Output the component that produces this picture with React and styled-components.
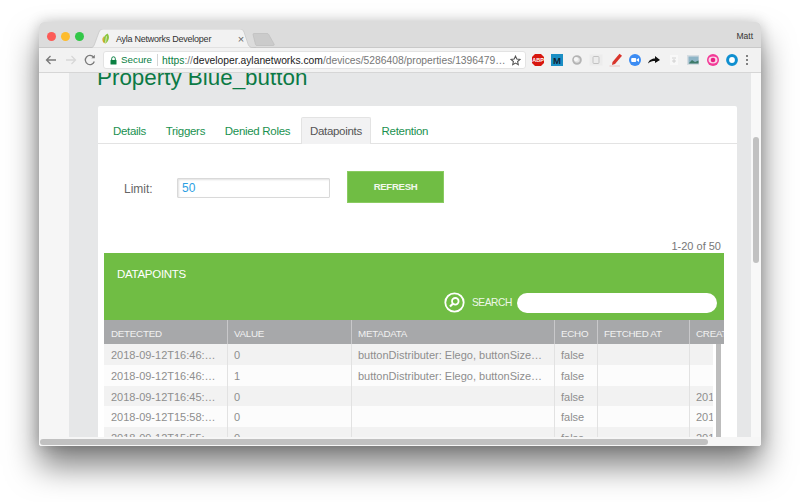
import React from "react";
import styled, { createGlobalStyle } from "styled-components";

const Global = createGlobalStyle`
  html, body {
    margin: 0;
    padding: 0;
    background: #fff;
    font-family: "Liberation Sans", Arial, sans-serif;
  }
`;

const Stage = styled.div`
  width: 800px;
  height: 502px;
  padding: 22px 39px 0;
  box-sizing: border-box;
  overflow: hidden;
`;

const Win = styled.div`
  width: 722px;
  height: 424px;
  border-radius: 5px 5px 3px 3px;
  overflow: hidden;
  display: flex;
  flex-direction: column;
  box-shadow: 0 20px 32px rgba(0, 0, 0, 0.5), 0 0 14px rgba(0, 0, 0, 0.2);
`;

const TitleBar = styled.div`
  height: 26px;
  flex: none;
  background: #dcdcdc;
  display: flex;
  align-items: flex-end;
  padding-left: 8px;
  position: relative;
  box-sizing: border-box;
  border-bottom: 1px solid #c9c9c9;
`;

const Lights = styled.div`
  display: flex;
  gap: 5px;
  align-self: flex-start;
  margin-top: 10px;
`;

const Light = styled.span`
  width: 9px;
  height: 9px;
  border-radius: 50%;
  background: ${p => p.$c};
`;

const Tab = styled.div`
  width: 166px;
  height: 19px;
  margin-left: 6px;
  margin-bottom: -1px;
  position: relative;
  display: flex;
  align-items: center;
  padding-left: 11px;
  box-sizing: border-box;
  font-size: 9px;
  letter-spacing: -0.25px;
  color: #333;
`;

const TabShape = styled.svg`
  position: absolute;
  left: 0;
  top: 0;
`;

const TabLabel = styled.span`
  position: relative;
  margin-left: 5px;
  flex: 1;
  white-space: nowrap;
`;

const TabClose = styled.span`
  position: relative;
  font-size: 11px;
  color: #666;
  margin-right: 12px;
`;

const Favicon = styled.svg`
  position: relative;
  flex: none;
`;

const NewTab = styled.svg`
  margin-left: -4px;
  margin-bottom: 1px;
`;

const UserName = styled.span`
  margin-left: auto;
  align-self: flex-start;
  margin-top: 9px;
  margin-right: 8px;
  font-size: 8.5px;
  color: #333;
`;

const Toolbar = styled.div`
  height: 25px;
  flex: none;
  background: #f2f2f2;
  display: flex;
  align-items: center;
  box-sizing: border-box;
  padding-left: 6px;
  border-bottom: 1px solid #d6d6d6;
`;

const NavButtons = styled.div`
  display: flex;
  align-items: center;
  gap: 7.5px;
  width: 58px;
  flex: none;
`;

const Omnibox = styled.div`
  width: 423px;
  height: 18px;
  flex: none;
  box-sizing: border-box;
  background: #fff;
  border: 1px solid #e3e3e3;
  border-radius: 3px;
  display: flex;
  align-items: center;
  padding-left: 6px;
  font-size: 10.3px;
  white-space: nowrap;
`;

const SecureText = styled.span`
  color: #0b8043;
  font-size: 9.8px;
  margin-left: 4px;
  padding-right: 5px;
  border-right: 1px solid #d5d5d5;
  margin-right: 4px;
  line-height: 12px;
`;

const UrlPart = styled.span`
  color: ${p => p.$c};
`;

const Url = styled.span`
  flex: 1;
`;

const Star = styled.svg`
  margin-right: 4px;
  flex: none;
`;

const Extensions = styled.div`
  display: flex;
  align-items: center;
  margin-left: 2.3px;
`;

const ExtSlot = styled.div`
  width: ${p => p.$w || 19.4}px;
  height: 14px;
  display: flex;
  justify-content: center;
  align-items: center;
`;

const Viewport = styled.div`
  height: 373px;
  flex: none;
  display: flex;
  flex-direction: column;
  background: #fafafa;
`;

const ViewportRow = styled.div`
  height: 364px;
  flex: none;
  display: flex;
  overflow: hidden;
`;

const Gutter = styled.div`
  width: 30px;
  flex: none;
  background: #f6f6f6;
`;

const Main = styled.div`
  width: 682px;
  flex: none;
  background: #e6e7e8;
  padding-left: 28px;
  padding-right: 14px;
  box-sizing: border-box;
`;

const Heading = styled.h1`
  margin: -9px 0 0;
  height: 42px;
  font-size: 22.4px;
  line-height: 28px;
  font-weight: 400;
  color: #0b7a45;
  white-space: nowrap;
`;

const Card = styled.div`
  background: #fff;
  height: 331px;
  margin-left: 1px;
  overflow: hidden;
  border-radius: 2px 2px 0 0;
`;

const Tabs = styled.div`
  display: flex;
  height: 38px;
  box-sizing: border-box;
  padding: 11px 0 0 6px;
  border-bottom: 1px solid #e3e3e3;
`;

const PageTab = styled.div`
  height: 27px;
  box-sizing: border-box;
  padding: 0 8px;
  margin-right: 1.7px;
  font-size: 11.5px;
  letter-spacing: -0.3px;
  line-height: 26px;
  white-space: nowrap;
  color: ${p => (p.$active ? "#555" : "#1a9150")};
  background: ${p => (p.$active ? "#f2f2f3" : "transparent")};
  border: 1px solid ${p => (p.$active ? "#e3e3e3" : "transparent")};
  border-bottom: 0;
  border-radius: 2px 2px 0 0;
`;

const LimitRow = styled.div`
  display: flex;
  align-items: flex-start;
  padding: 27px 0 0 26px;
  height: 60px;
`;

const LimitLabel = styled.label`
  width: 53px;
  font-size: 12px;
  color: #666;
  padding-top: 11px;
`;

const LimitInput = styled.div`
  width: 153px;
  height: 20px;
  margin-top: 7px;
  box-sizing: border-box;
  border: 1px solid #d9d9d9;
  box-shadow: inset 1px 1px 2px rgba(0, 0, 0, 0.12);
  padding-left: 4px;
  font-size: 12px;
  line-height: 19px;
  color: #2d9fe3;
  border-radius: 1px;
`;

const Refresh = styled.button`
  width: 97px;
  height: 32px;
  margin-left: 17px;
  border: 1px solid #8acb61;
  background: #70bd44;
  color: #f2f8ec;
  font-family: inherit;
  font-size: 9.6px;
  letter-spacing: -0.3px;
  font-weight: 700;
  padding: 0 0 1px;
`;

const Count = styled.div`
  text-align: right;
  font-size: 11px;
  color: #777;
  padding: 8px 16px 0 0;
  height: 14px;
  line-height: 14px;
`;

const TablePanel = styled.div`
  margin: 0 13px 0 6px;
`;

const PanelHead = styled.div`
  height: 67px;
  background: #70bd44;
  box-sizing: border-box;
  padding: 14px 7px 0 13px;
  display: flex;
  flex-direction: column;
`;

const PanelTitle = styled.div`
  color: #fff;
  font-size: 11.5px;
  letter-spacing: -0.28px;
  line-height: 14px;
`;

const SearchRow = styled.div`
  display: flex;
  align-items: center;
  justify-content: flex-end;
  margin-top: 11px;
`;

const SearchLabel = styled.span`
  color: #eef7e8;
  font-size: 10.2px;
  letter-spacing: -0.4px;
  margin: 0 5px 0 7px;
`;

const SearchBox = styled.div`
  width: 200px;
  height: 20px;
  background: #fff;
  border-radius: 10px;
`;

const TableWrap = styled.div`
  position: relative;
`;

const Grid = styled.div`
  display: grid;
  grid-template-columns: 123px 124px 203px 43px 92px 35px;
  overflow: hidden;
`;

const HeadCell = styled.div`
  height: 24px;
  background: #a7a8aa;
  color: #f1f1f1;
  font-size: 9.8px;
  letter-spacing: -0.26px;
  line-height: 28px;
  padding-left: ${p => (p.$first ? 7 : 6)}px;
  white-space: nowrap;
  overflow: hidden;
  box-sizing: border-box;
  border-left: ${p => (p.$first ? "0" : "1px solid #c8c8ca")};
`;

const Cell = styled.div`
  height: 20.8px;
  box-sizing: border-box;
  background: ${p => (p.$odd ? "#f2f2f2" : "#fcfcfc")};
  color: #8e8e8e;
  font-size: 11px;
  line-height: 22.5px;
  padding-left: ${p => (p.$first ? 7 : 6)}px;
  white-space: nowrap;
  overflow: hidden;
  border-left: ${p => (p.$first ? "0" : "1px solid #e2e2e2")};
`;

const InnerGap = styled.div`
  position: absolute;
  right: 0;
  top: 24px;
  bottom: 0;
  width: 11px;
  background: #fff;
`;

const InnerScroll = styled.div`
  position: absolute;
  right: 3px;
  top: 24px;
  bottom: 0;
  width: 5px;
  background: #bdbdbd;
`;

const RightGutter = styled.div`
  width: 10px;
  flex: none;
  background: #f8f8f8;
  box-sizing: border-box;
  padding: 64px 2px 0;
`;

const VThumb = styled.div`
  height: 126px;
  background: #c1c1c1;
  border-radius: 3px;
`;

const HScroll = styled.div`
  height: 9px;
  flex: none;
  background: #f6f6f6;
  box-sizing: border-box;
  padding: 2px 0 0 1px;
`;

const HThumb = styled.div`
  width: 668px;
  height: 6px;
  background: #c1c1c1;
  border-radius: 3px;
`;

const columns = ["DETECTED", "VALUE", "METADATA", "ECHO", "FETCHED AT", "CREATED"];
const meta = "buttonDistributer: Elego, buttonSize…";
const rows = [
  ["2018-09-12T16:46:…", "0", meta, "false", "", ""],
  ["2018-09-12T16:46:…", "1", meta, "false", "", ""],
  ["2018-09-12T16:45:…", "0", "", "false", "", "201"],
  ["2018-09-12T15:58:…", "0", "", "false", "", "201"],
  ["2018-09-12T15:55:…", "0", "", "false", "", "201"],
];

const tabs = ["Details", "Triggers", "Denied Roles", "Datapoints", "Retention"];

function Extension({ children }) {
  return (
    <ExtSlot>
      <svg width="14" height="14" viewBox="0 0 14 14">{children}</svg>
    </ExtSlot>
  );
}

function ExtensionIcons() {
  return (
    <Extensions>
      <Extension>
        <polygon points="4,1 10,1 13,4 13,10 10,13 4,13 1,10 1,4" fill="#d7170f" />
        <text x="7" y="9" fontSize="5.5" fontWeight="700" fill="#fff" textAnchor="middle">ABP</text>
      </Extension>
      <Extension>
        <rect x="1" y="1" width="12" height="12" fill="#1b8fc4" />
        <text x="7" y="10.5" fontSize="9.5" fontWeight="700" fill="#123" textAnchor="middle">M</text>
      </Extension>
      <Extension>
        <circle cx="7" cy="7" r="3.8" fill="#e4e4e4" stroke="#b4b4b4" strokeWidth="2" />
        <circle cx="6" cy="6.2" r="2.1" fill="#f6f6f6" />
      </Extension>
      <Extension>
        <rect x="0.5" y="1.5" width="13" height="11" fill="#ececec" />
        <rect x="4" y="3.5" width="6" height="7" rx="1" fill="none" stroke="#c2c2c2" />
      </Extension>
      <Extension>
        <path d="M3.5 9 L10.5 0.8 L13 2.8 L6 11 L3 12 Z" fill="#d9342b" />
        <path d="M0.5 13 H11" stroke="#e6c4c2" strokeWidth="1" />
      </Extension>
      <Extension>
        <circle cx="7" cy="7" r="6" fill="#3c8cf3" />
        <rect x="3.2" y="5" width="5" height="4" rx="1" fill="#fff" />
        <path d="M8.8 6.5 L11 5 V9 L8.8 7.5 Z" fill="#fff" />
      </Extension>
      <Extension>
        <path d="M1 10.5 C2 7 5 5.6 8 5.6 V3 L13 7 L8 10 V8 C5.5 8 3 8.6 1 10.5 Z" fill="#111" />
      </Extension>
      <Extension>
        <rect x="3" y="2" width="8" height="10" fill="#f8f8f8" />
        <path d="M5 5 H9 M7 6 V10 M5 8 H9" stroke="#c9c9c9" strokeWidth="0.8" />
      </Extension>
      <Extension>
        <rect x="1" y="2" width="12" height="10" fill="#d6dde2" />
        <rect x="2.5" y="3.5" width="10" height="7" fill="#8db4c6" />
        <path d="M2.5 10.5 L6 7 L9 9 L12.5 7.5 V10.5 Z" fill="#3d7a68" />
      </Extension>
      <Extension>
        <circle cx="7" cy="7" r="6" fill="#f23a97" />
        <ellipse cx="7" cy="7" rx="4.5" ry="3.4" fill="#fbd2e6" />
        <circle cx="7" cy="7" r="2.3" fill="#e81f83" />
      </Extension>
      <Extension>
        <circle cx="7" cy="7" r="4.4" fill="#fff" stroke="#0f8fd0" strokeWidth="3" />
      </Extension>
      <ExtSlot $w={11}>
        <svg width="4" height="12" viewBox="0 0 4 12">
          <circle cx="2" cy="2" r="1.1" fill="#666" />
          <circle cx="2" cy="6" r="1.1" fill="#666" />
          <circle cx="2" cy="10" r="1.1" fill="#666" />
        </svg>
      </ExtSlot>
    </Extensions>
  );
}

export default function App() {
  return (
    <Stage>
      <Global />
      <Win>
        <TitleBar>
          <Lights>
            <Light $c="#fc5b57" />
            <Light $c="#fdbc2e" />
            <Light $c="#33c748" />
          </Lights>
          <Tab>
            <TabShape width="166" height="19" viewBox="0 0 166 19">
              <path d="M0 19 C3 19 4 17 5 14 L9 3 C10 1 11 0 13 0 H150 C152 0 153 1 154 3 L158 15 C159 18 161 19 166 19 Z" fill="#f2f2f2" stroke="#c4c4c4" strokeWidth="0.7" />
            </TabShape>
            <Favicon width="10" height="12" viewBox="0 0 11 12">
              <path d="M7 0 C10 3 9 8 5 11 C1 9 2 3 7 0 Z" fill="#8cc63f" />
              <path d="M3 3 C1 5 1 9 4 11 C3 8 3 6 3 3 Z" fill="#d9a520" />
              <path d="M6 3 L5 10" stroke="#f2f2f2" strokeWidth="0.8" />
            </Favicon>
            <TabLabel>Ayla Networks Developer</TabLabel>
            <TabClose>×</TabClose>
          </Tab>
          <NewTab width="24" height="13" viewBox="0 0 24 13">
            <path d="M1 1.5 C1 .8 1.5 .5 2 .5 H15 C16 .5 16.5 1 17 2 L22 11 C22.5 12 22 12.5 21 12.5 H5 C4 12.5 3.6 12 3.4 11 Z" fill="#cbcbcb" stroke="#bdbdbd" strokeWidth="0.7" />
          </NewTab>
          <UserName>Matt</UserName>
        </TitleBar>
        <Toolbar>
          <NavButtons>
            <svg width="12" height="12" viewBox="0 0 12 12" fill="none" stroke="#7a7a7a" strokeWidth="1.3">
              <path d="M11 6 H1.5 M5.5 2 L1.5 6 L5.5 10" />
            </svg>
            <svg width="12" height="12" viewBox="0 0 12 12" fill="none" stroke="#d8d8d8" strokeWidth="1.3">
              <path d="M1 6 H10.5 M6.5 2 L10.5 6 L6.5 10" />
            </svg>
            <svg width="12" height="12" viewBox="0 0 12 12" fill="none" stroke="#7a7a7a" strokeWidth="1.3">
              <path d="M10.3 7.5 A4.6 4.6 0 1 1 9.6 3.2" />
              <path d="M10.8 .8 V4.2 H7.4 Z" fill="#7a7a7a" strokeWidth="0" />
            </svg>
          </NavButtons>
          <Omnibox>
            <svg width="7" height="9" viewBox="0 0 7 9">
              <path d="M1.7 4 V2.6 A1.8 1.8 0 0 1 5.3 2.6 V4" fill="none" stroke="#0b8043" strokeWidth="1" />
              <rect x="0.5" y="4" width="6" height="4.6" rx="0.5" fill="#0b8043" />
            </svg>
            <SecureText>Secure</SecureText>
            <Url>
              <UrlPart $c="#0b8043">https</UrlPart>
              <UrlPart $c="#777">://</UrlPart>
              <UrlPart $c="#222">developer.aylanetworks.com</UrlPart>
              <UrlPart $c="#777">/devices/5286408/properties/1396479…</UrlPart>
            </Url>
            <Star width="11" height="11" viewBox="0 0 24 24" fill="none" stroke="#555" strokeWidth="2.4">
              <path d="M12 2.5 L14.9 8.9 L21.8 9.6 L16.6 14.2 L18.1 21.1 L12 17.5 L5.9 21.1 L7.4 14.2 L2.2 9.6 L9.1 8.9 Z" />
            </Star>
          </Omnibox>
          <ExtensionIcons />
        </Toolbar>
        <Viewport>
          <ViewportRow>
            <Gutter />
            <Main>
              <Heading>Property Blue_button</Heading>
              <Card>
                <Tabs>
                  {tabs.map(t => (
                    <PageTab key={t} $active={t === "Datapoints"}>{t}</PageTab>
                  ))}
                </Tabs>
                <LimitRow>
                  <LimitLabel>Limit:</LimitLabel>
                  <LimitInput>50</LimitInput>
                  <Refresh>REFRESH</Refresh>
                </LimitRow>
                <Count>1-20 of 50</Count>
                <TablePanel>
                  <PanelHead>
                    <PanelTitle>DATAPOINTS</PanelTitle>
                    <SearchRow>
                      <svg width="21" height="21" viewBox="0 0 21 21" fill="none" stroke="#fff">
                        <circle cx="10.5" cy="10.5" r="9.2" strokeWidth="1.8" />
                        <circle cx="11.3" cy="9.3" r="3.3" strokeWidth="1.8" />
                        <path d="M8.8 11.8 L6 14.5" strokeWidth="2.2" />
                      </svg>
                      <SearchLabel>SEARCH</SearchLabel>
                      <SearchBox />
                    </SearchRow>
                  </PanelHead>
                  <TableWrap>
                    <Grid>
                      {columns.map((c, i) => (
                        <HeadCell key={c} $first={i === 0}>{c}</HeadCell>
                      ))}
                      {rows.flatMap((r, ri) =>
                        r.map((v, ci) => (
                          <Cell key={ri + "-" + ci} $first={ci === 0} $odd={ri % 2 === 0}>{v}</Cell>
                        ))
                      )}
                    </Grid>
                    <InnerGap />
                    <InnerScroll />
                  </TableWrap>
                </TablePanel>
              </Card>
            </Main>
            <RightGutter>
              <VThumb />
            </RightGutter>
          </ViewportRow>
          <HScroll>
            <HThumb />
          </HScroll>
        </Viewport>
      </Win>
    </Stage>
  );
}
